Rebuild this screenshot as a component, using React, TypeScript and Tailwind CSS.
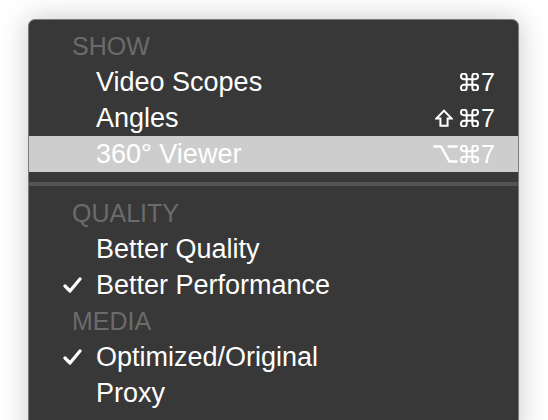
import React from "react";

type Key = "cmd" | "shift" | "opt" | "7";

type Row =
  | { kind: "header"; label: string }
  | { kind: "item"; label: string; checked?: boolean; shortcut?: Key[]; active?: boolean }
  | { kind: "sep" };

const rows: Row[] = [
  { kind: "header", label: "SHOW" },
  { kind: "item", label: "Video Scopes", shortcut: ["cmd", "7"] },
  { kind: "item", label: "Angles", shortcut: ["shift", "cmd", "7"] },
  { kind: "item", label: "360° Viewer", shortcut: ["opt", "cmd", "7"], active: true },
  { kind: "sep" },
  { kind: "header", label: "QUALITY" },
  { kind: "item", label: "Better Quality" },
  { kind: "item", label: "Better Performance", checked: true },
  { kind: "header", label: "MEDIA" },
  { kind: "item", label: "Optimized/Original", checked: true },
  { kind: "item", label: "Proxy" },
];

const CmdIcon = () => (
  <svg width="19" height="18" viewBox="2.5 2.5 19 19" fill="none" stroke="currentColor" strokeWidth="2.1">
    <path d="M15 6v12a3 3 0 1 0 3-3H6a3 3 0 1 0 3 3V6a3 3 0 1 0-3 3h12a3 3 0 1 0-3-3" />
  </svg>
);

const ShiftIcon = () => (
  <svg width="18" height="18" viewBox="0 0 18 18" fill="none" stroke="currentColor" strokeWidth="2" strokeLinejoin="miter">
    <path d="M9 1.6 L16.6 9.6 H12.6 V16.8 H5.4 V9.6 H1.4 Z" />
  </svg>
);

const OptIcon = () => (
  <svg width="25" height="18" viewBox="0 0 25 18" fill="none" stroke="currentColor" strokeWidth="2.4">
    <path d="M0.5 1.5 H8 L16.5 16.5 H24.5" />
    <path d="M14.5 1.5 H24.5" />
  </svg>
);

const Shortcut = ({ keys }: { keys: Key[] }) => (
  <span className="flex items-center">
    {keys.map((k, i) => {
      if (k === "7")
        return (
          <span key={i} className="ml-[2px] text-[25px] leading-none">
            7
          </span>
        );
      if (k === "cmd")
        return (
          <span key={i} className="ml-[2px]">
            <CmdIcon />
          </span>
        );
      if (k === "shift")
        return (
          <span key={i} className="mr-[5px]">
            <ShiftIcon />
          </span>
        );
      return (
        <span key={i}>
          <OptIcon />
        </span>
      );
    })}
  </span>
);

const Check = () => (
  <svg width="19" height="16" viewBox="0 0 19 16" fill="none" stroke="currentColor" strokeWidth="3.2" strokeLinecap="round" strokeLinejoin="round">
    <polyline points="2,9 7,14 17,2" />
  </svg>
);

export default function App() {
  return (
    <div className="h-[420px] w-[548px] overflow-hidden bg-white font-['Liberation_Sans',sans-serif]">
      <div className="ml-[28px] mt-[19px] h-[420px] w-[491px] rounded-t-[7px] border border-[#7c7c7c] bg-[#383838] pt-[8px] shadow-[0_0_28px_rgba(0,0,0,0.22)]">
        {rows.map((row, i) => {
          if (row.kind === "sep") {
            return (
              <div key={i} className="flex h-[23px] items-center">
                <div className="h-[4px] w-full bg-[#535353]" />
              </div>
            );
          }
          if (row.kind === "header") {
            return (
              <div
                key={i}
                className="flex h-9 items-center pl-[43px] text-[25px] leading-none text-[#6b6b6b]"
              >
                {row.label}
              </div>
            );
          }
          return (
            <div
              key={i}
              className={`relative flex h-9 items-center justify-between pl-[67px] pr-[23px] text-[27px] leading-none text-white ${
                row.active ? "bg-[#cdcdcd]" : ""
              }`}
            >
              {row.checked && (
                <span className="absolute left-[34px] top-[10px]">
                  <Check />
                </span>
              )}
              <span>{row.label}</span>
              {row.shortcut && <Shortcut keys={row.shortcut} />}
            </div>
          );
        })}
      </div>
    </div>
  );
}
